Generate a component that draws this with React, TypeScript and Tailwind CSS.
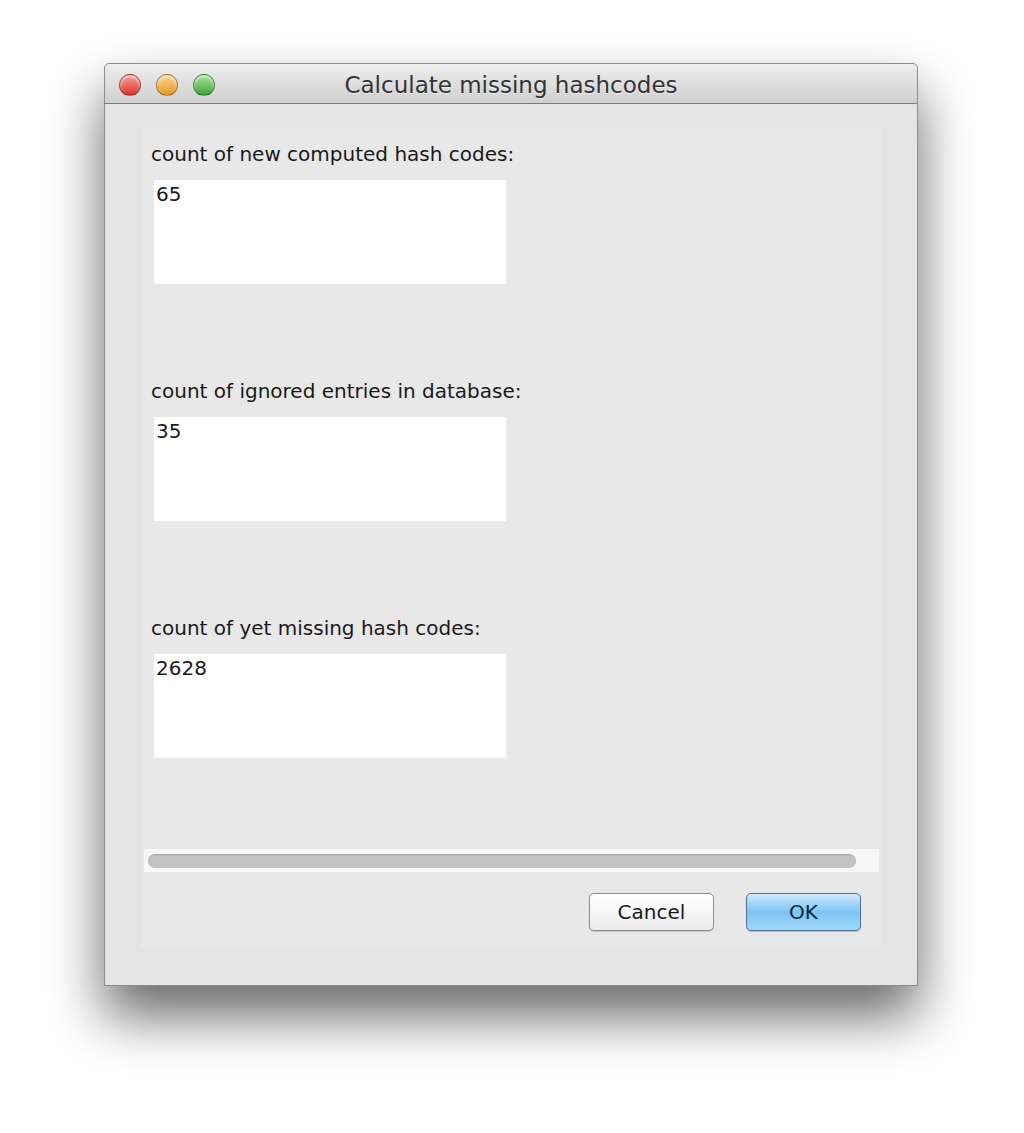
import React from 'react';

const font = { fontFamily: '"DejaVu Sans", "Liberation Sans", sans-serif' };

interface CountFieldProps {
    label: string;
    value: string;
}

function CountField({ label, value }: CountFieldProps) {
    return (
        <div className="flex flex-col">
            <div className="h-[26px] pl-[10px] text-[20px] leading-[26px] text-[#1a1a1a]">{label}</div>
            <div className="ml-[13px] mt-[13px] h-[104px] w-[352px] bg-white pl-[2px] pt-[1px] text-[20px] leading-[26px] text-[#1a1a1a]">
                {value}
            </div>
        </div>
    );
}

function TrafficLight({ color }: { color: string }) {
    return (
        <div className={`h-[22px] w-[22px] rounded-full border border-black/30 ${color} shadow-[inset_0_2px_3px_rgba(255,255,255,0.6)]`} />
    );
}

export default function App() {
    return (
        <div className="min-h-[1133px] w-[1024px] bg-white pl-[104px] pt-[63px]" style={font}>
            <div className="flex h-[923px] w-[814px] flex-col rounded-t-[5px] border border-[#8c8c8c] bg-[#e4e4e4] shadow-[0_30px_55px_rgba(0,0,0,0.6)]">
                <div className="relative flex h-[40px] items-center rounded-t-[5px] border-b border-[#7a7a7a] bg-gradient-to-b from-[#eeeeee] to-[#cfcfcf]">
                    <div className="flex gap-[15px] pl-[14px] pt-[2px]">
                        <TrafficLight color="bg-gradient-to-b from-[#f59a96] to-[#d6302b]" />
                        <TrafficLight color="bg-gradient-to-b from-[#fbd58a] to-[#e39a1a]" />
                        <TrafficLight color="bg-gradient-to-b from-[#a9e29a] to-[#3aa332]" />
                    </div>
                    <div className="absolute inset-0 flex items-center justify-center pt-[4px] text-[23px] text-[#333] [text-shadow:0_1px_0_rgba(255,255,255,0.6)]">
                        Calculate missing hashcodes
                    </div>
                </div>
                <div className="px-[36px] pt-[24px]">
                    <div className="flex h-[820px] w-[740px] flex-col bg-[#e8e8e8] pt-[13px]">
                        <div className="flex flex-col gap-[94px]">
                            <CountField label="count of new computed hash codes:" value="65" />
                            <CountField label="count of ignored entries in database:" value="35" />
                            <CountField label="count of yet missing hash codes:" value="2628" />
                        </div>
                        <div className="ml-[3px] mt-[91px] flex h-[23px] w-[735px] items-center bg-[#f7f7f7] pl-[4px]">
                            <div className="h-[14px] w-[708px] rounded-full bg-[#c3c3c3] shadow-[inset_0_1px_2px_rgba(0,0,0,0.15)]" />
                        </div>
                        <div className="mt-[21px] flex justify-end gap-[32px] pr-[20px]">
                            <button className="h-[38px] w-[125px] rounded-[5px] border border-[#8d8d8d] bg-gradient-to-b from-white to-[#ececec] text-[20px] text-[#1a1a1a] shadow-[0_1px_1px_rgba(0,0,0,0.15)]">
                                Cancel
                            </button>
                            <button className="h-[38px] w-[115px] rounded-[5px] border border-[#4f6f96] bg-gradient-to-b from-[#cde9fc] via-[#7cc4f4] to-[#9fd6f8] text-[20px] text-[#10243a] shadow-[0_1px_1px_rgba(0,0,0,0.2)]">
                                OK
                            </button>
                        </div>
                    </div>
                </div>
            </div>
        </div>
    );
}
